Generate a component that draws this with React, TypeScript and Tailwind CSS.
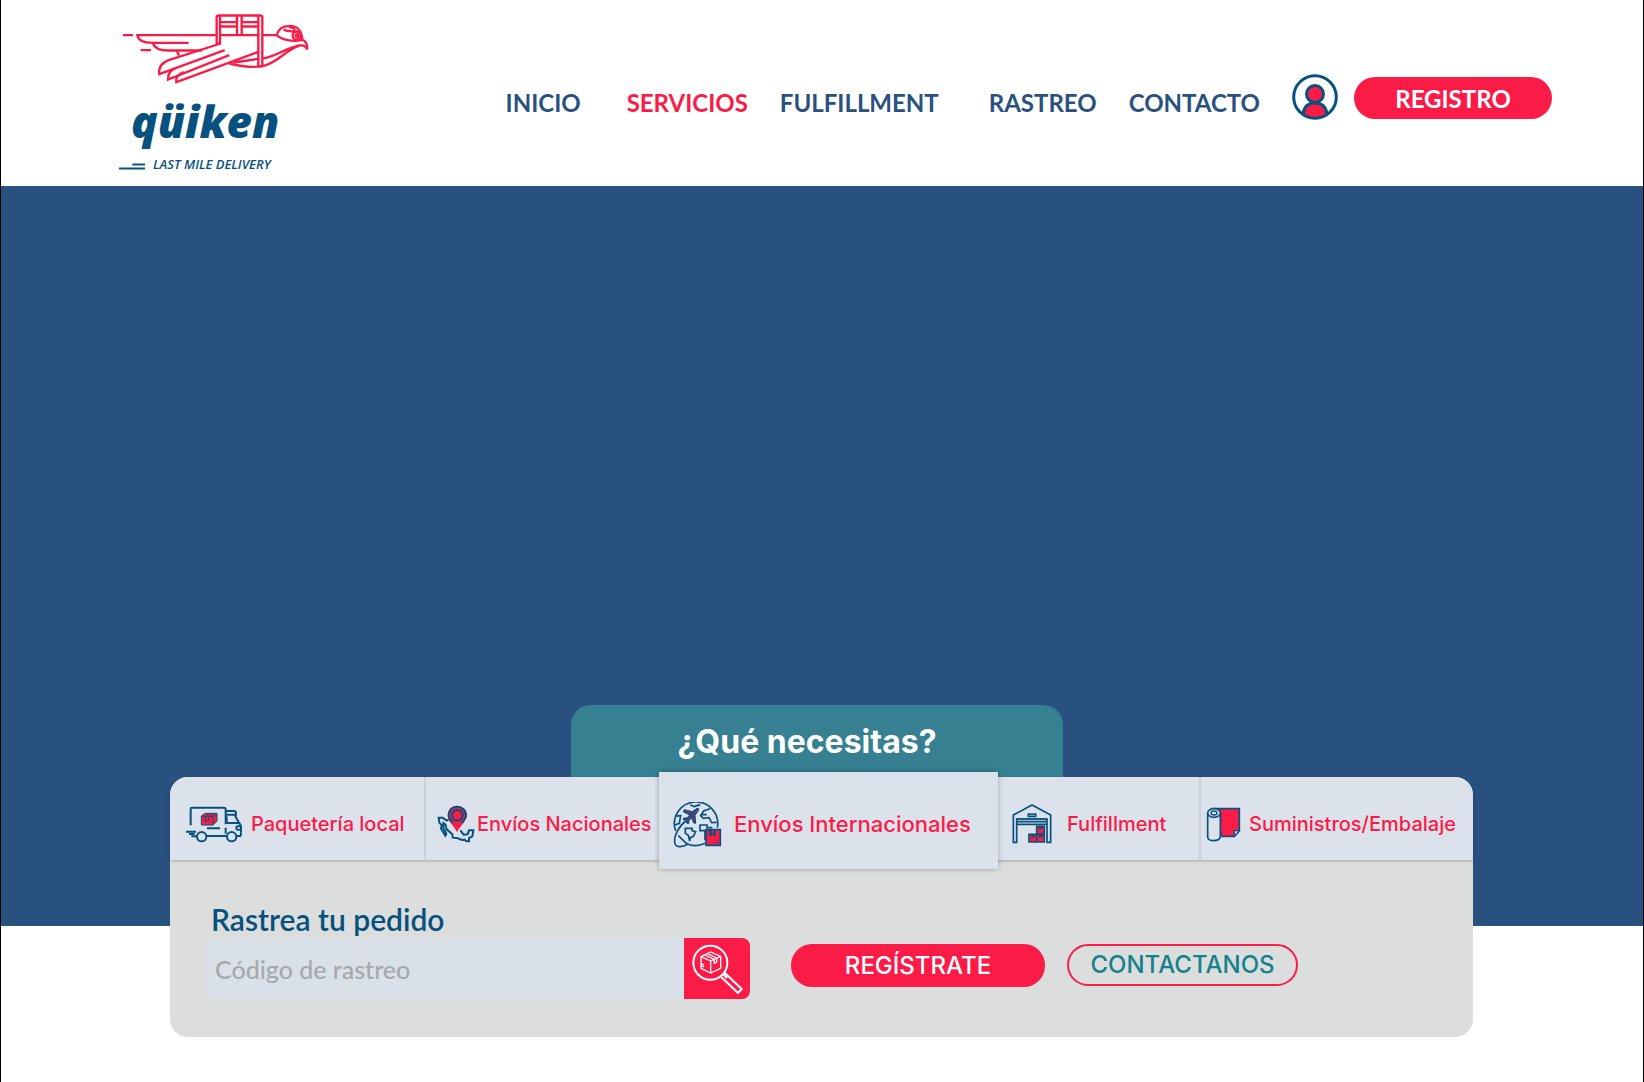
import React from "react";

const NAVY = "#07517f";
const RED = "#fb1b47";

function Bird() {
  return (
    <svg viewBox="0 0 690 260" className="h-[87px] w-[230px]" fill="none" stroke={RED} strokeWidth="7" aria-hidden="true">
      <path d="M69 105H99M122 150H153" />
      <path d="M350 105H112C114 120 128 128 158 128H266" />
      <path d="M158 128C163 144 178 151 205 151H306" />
      <path d="M230 152L237 166" />
      <path d="M350 130V52Q350 46 356 46H481Q487 46 487 52V198" />
      <path d="M360 132V46M475 46V198M348 132L362 128M474 198H488" />
      <path d="M411 46V104M425 46V104M362 66H411M425 66H475M362 79H411M425 79H475M360 105H475M487 105H530" />
      <path d="M362 130L206 180C184 188 175 200 178 222L374 150" />
      <path d="M226 204C208 212 203 222 204 238L388 165" />
      <path d="M252 216C232 223 227 232 229 246L475 155" />
      <path d="M388 190C432 201 460 203 488 198C535 187 548 156 598 136" />
      <path d="M400 187C435 183 452 180 475 176M488 175C525 170 548 148 598 136C611 135 619 140 621 148C623 136 622 125 606 118" />
      <path d="M530 105C535 86 551 77 569 77C590 77 606 90 607 119C583 125 550 122 530 105Z" />
      <path d="M551 88C559 94 571 92 581 95C589 84 576 80 567 82" />
      <circle cx="590" cy="106" r="12" />
      <circle cx="591" cy="106" r="4" fill={RED} />
    </svg>
  );
}

function Logo() {
  return (
    <a href="#inicio" aria-label="qüiken last mile delivery" className="flex w-[230px] shrink-0 flex-col">
      <Bird />
      <span className="pl-[31px] font-['Open_Sans'] text-[44px] leading-[69px] font-extrabold text-[#07517f] italic">
        qüiken
      </span>
      <span className="flex items-center gap-2 pl-[19px]">
        <svg viewBox="0 0 78 20" className="mt-1 h-[7px] w-[26px]" stroke={NAVY} strokeWidth="6" aria-hidden="true">
          <path d="M40 4H78M0 16H78" />
        </svg>
        <span className="font-['Open_Sans'] text-[13px] leading-4 font-semibold whitespace-nowrap text-[#07517f] italic">
          LAST MILE DELIVERY
        </span>
      </span>
    </a>
  );
}

function UserIcon() {
  return (
    <svg viewBox="0 0 46 46" className="size-[46px]" fill="none" stroke={NAVY} strokeWidth="3" aria-hidden="true">
      <path d="M11 40C12 33 16 29 23 29S34 33 35 40C28 45 18 45 11 40Z" fill={RED} stroke="none" />
      <path d="M11 40C12 33 16 29 23 29S34 33 35 40" />
      <circle cx="23" cy="20" r="8.5" fill={RED} />
      <circle cx="23" cy="23" r="21.3" />
    </svg>
  );
}

function TruckIcon() {
  return (
    <svg viewBox="75 105 174 117" className="h-[39px] w-[58px] shrink-0" fill="none" stroke={NAVY} strokeWidth="6" aria-hidden="true">
      <path d="M92 166V117Q92 113 96 113H192Q197 113 197 118V163M197 173V191" />
      <path d="M197 123H221Q228 123 228 130V137M197 134H224L237 159M199 159H238L243 169V187M200 139V159" />
      <path d="M78 185H108M87 192H104M94 199H110M140 198H200M231 198H241Q243 198 243 187M141 175H180" />
      <path d="M242 169H233Q229 169 229 174Q229 179 233 179H242" />
      <circle cx="125" cy="200" r="14" />
      <circle cx="215" cy="200" r="14" />
      <path d="M124 138L136 130H171V153L159 165H124Z" fill={RED} strokeWidth="3" />
      <path d="M124 139H159L171 130M159 139V164M136 139L147 130M147 139L158 130M136 140V152H147V140" strokeWidth="3" />
    </svg>
  );
}

function MexicoIcon() {
  return (
    <svg viewBox="51 105 114 114" className="size-[38px] shrink-0" fill="none" stroke={NAVY} strokeWidth="6" aria-hidden="true">
      <path d="M86 150L79 151L68 143H56L58 158L65 166L63 176L76 197L79 191L70 174L70 159L76 163L80 178L97 193L98 203L111 204L126 210L134 209L139 214H147L147 204L157 199L160 181L147 181L143 193L131 194L121 181" />
      <path d="M111 180C103 164 86 154 86 136C86 120 97 110 111 110S137 120 137 136C137 154 119 164 111 180Z" fill={RED} stroke={RED} />
      <path d="M98 159C91 152 86 145 86 136C86 120 97 110 111 110S138 120 138 136C138 145 132 152 125 159" />
      <circle cx="112" cy="136" r="16" />
    </svg>
  );
}

function GlobeIcon() {
  return (
    <svg viewBox="99 335 147 138" className="h-[46px] w-[49px] shrink-0" fill="none" stroke={NAVY} strokeWidth="5" aria-hidden="true">
      <path d="M195 459A65 65 0 0 1 136 458M107 422A65 65 0 1 1 232 412" />
      <path d="M140 389C116 408 99 440 105 460C109 472 128 471 143 462M115 436L139 459" />
      <path d="M106 377L122 376L118 399L105 404M151 343L162 349L181 343M210 355L191 362L182 376L190 384L207 382L215 397L230 396M185 373H200" />
      <path d="M136 414H156V421L167 424L160 438L151 442L149 452L145 435L136 429ZM195 450V421H180V404H201V412H217" />
      <path d="M133 358L157 364L171 354L176 355L175 361L165 375L167 399L161 398L155 383L147 390L146 400L141 399L138 390L129 387L131 383L141 383L149 374L130 364Z" fill={NAVY} strokeWidth="3" />
      <path d="M140 391L173 358M138 362L152 369M163 391L159 381" stroke={RED} strokeWidth="3" />
      <path d="M198 418H241V465H198Z" fill={RED} />
      <path d="M209 419V438L218 432L226 438V419" fill={NAVY} strokeWidth="2" />
      <path d="M215 420H221V429L218 427L215 429Z" fill={RED} stroke="none" />
      <path d="M225 457H234" strokeWidth="3" />
    </svg>
  );
}

function WarehouseIcon() {
  return (
    <svg viewBox="66 104 120 120" className="size-10 shrink-0" fill="none" stroke={NAVY} strokeWidth="5" aria-hidden="true">
      <path d="M70 219V137L126 107L182 137V219H171V149H80V219Z" />
      <path d="M80 149H171M80 157H171M80 165H171M115 134H137V141H115Z" />
      <path d="M140 171H163V194H140ZM117 195H140V218H117ZM140 195H163V218H140Z" fill={RED} />
      <path d="M148 171V180L152 177L156 180V171ZM125 195V204L129 201L133 204V195ZM148 195V204L152 201L156 204V195Z" fill={NAVY} strokeWidth="2" />
    </svg>
  );
}

function RollIcon() {
  return (
    <svg viewBox="78 113 105 105" className="size-[35px] shrink-0" fill="none" stroke={NAVY} strokeWidth="5" aria-hidden="true">
      <path d="M101 118H178V184L163 201H121V132Z" fill={RED} />
      <path d="M178 184H163V201Z" fill="#dce2ec" strokeWidth="4" />
      <path d="M83 132V203Q84 214 101 214T121 203V132" fill="#dce2ec" />
      <ellipse cx="102" cy="131" rx="19" ry="13" fill="#dce2ec" />
      <ellipse cx="102" cy="131" rx="9" ry="6" strokeWidth="4" />
    </svg>
  );
}

function SearchBoxIcon() {
  return (
    <svg viewBox="38 45 153 150" className="h-[50px] w-[51px]" fill="none" stroke="#fff" strokeWidth="6" strokeLinejoin="round" aria-hidden="true">
      <circle cx="93" cy="101" r="51" />
      <path d="M125 143L176 192L187 180L136 131M133 137L143 147" />
      <path d="M65 83L94 69L124 82V118L94 132L65 118ZM65 83L94 96L124 82M94 96V132M75 78L105 91V103L112 99V87L84 74M66 110L74 114M66 104L74 108" strokeWidth="4" />
    </svg>
  );
}

const links = [
  { label: "INICIO", className: "mr-[46px] text-[#28517f]" },
  { label: "SERVICIOS", className: "mr-8 text-[#fb1b47]" },
  { label: "FULFILLMENT", className: "mr-[50px] text-[#28517f]" },
  { label: "RASTREO", className: "mr-8 text-[#28517f]" },
  { label: "CONTACTO", className: "mr-8 text-[#28517f]" },
];

const tabs = [
  { label: "Paquetería local", icon: <TruckIcon />, className: "gap-2 rounded-tl-[18px] pt-[11px] pl-[15px] text-[20px]" },
  { label: "Envíos Nacionales", icon: <MexicoIcon />, className: "gap-[2px] border-l-2 border-[#cbd1da] pt-[11px] pl-[11px] text-[20px]" },
  {
    label: "Envíos Internacionales",
    icon: <GlobeIcon />,
    className: "relative z-10 -mt-[5px] -mb-[9px] gap-3 pt-2 pl-[14px] text-[22px] shadow-[0_0_5px_rgba(0,0,0,0.3)]",
  },
  { label: "Fulfillment", icon: <WarehouseIcon />, className: "gap-[15px] pt-[11px] pl-[14px] text-[20px]" },
  { label: "Suministros/Embalaje", icon: <RollIcon />, className: "gap-2 rounded-tr-[18px] border-l-2 border-[#cbd1da] pt-[11px] pl-[5px] text-[20px]" },
];

export default function App() {
  return (
    <div className="min-h-screen border-x border-black bg-white font-['Inter',sans-serif]">
      <header className="flex min-h-[186px] items-start justify-between pr-[91px] pl-[99px]">
        <Logo />
        <div className="flex items-center pt-[74px]">
          <nav className="flex items-center pt-[11px] font-['Lato',sans-serif] text-2xl leading-7 font-bold">
            {links.map((l) => (
              <a key={l.label} href="#" className={l.className}>
                {l.label}
              </a>
            ))}
          </nav>
          <a href="#" aria-label="Mi cuenta" className="mr-4">
            <UserIcon />
          </a>
          <button className="mt-[2px] h-[42px] w-[198px] rounded-full bg-[#fb1b47] pt-[2px] font-['Lato',sans-serif] text-2xl font-bold text-white">
            REGISTRO
          </button>
        </div>
      </header>

      <main>
        <section className="flex h-[740px] flex-col justify-end bg-[#28517f] pr-[170px] pl-[169px]">
          <div className="-mb-[111px] flex flex-col">
            <h1 className="mr-[410px] ml-[401px] h-[72px] rounded-t-[20px] bg-[#368092] pr-5 text-center text-[32px] leading-[74px] font-bold text-white">
              ¿Qué necesitas?
            </h1>
            <div className="rounded-[18px] bg-[#dcdedd]">
              <div className="grid h-[83px] grid-cols-[254fr_235fr_339fr_201fr_274fr] rounded-t-[18px] shadow-[0_1px_3px_rgba(0,0,0,0.25)]">
                {tabs.map((t) => (
                  <button
                    key={t.label}
                    className={`flex items-center bg-[#dce2ec] font-medium whitespace-nowrap text-[#fb1b47] ${t.className}`}
                  >
                    {t.icon}
                    <span>{t.label}</span>
                  </button>
                ))}
              </div>
              <form className="flex items-end px-[37px] pt-[42px] pb-[38px]" onSubmit={(e) => e.preventDefault()}>
                <div className="mr-[41px]">
                  <label htmlFor="codigo" className="block pb-[2px] pl-1 font-['Lato',sans-serif] text-[30px] leading-[34px] font-semibold text-[#07517f]">
                    Rastrea tu pedido
                  </label>
                  <div className="flex h-[61px]">
                    <input
                      id="codigo"
                      type="text"
                      placeholder="Código de rastreo"
                      className="w-[477px] rounded-l-[8px] bg-[#dae0e8] pt-[2px] pl-2 font-['Lato',sans-serif] text-[25px] font-medium outline-none placeholder:text-[#a5a9ae]"
                    />
                    <button aria-label="Buscar" className="flex w-[66px] items-center justify-center rounded-r-[8px] bg-[#fb1b47]">
                      <SearchBoxIcon />
                    </button>
                  </div>
                </div>
                <button className="mr-[22px] mb-3 h-[43px] w-[254px] rounded-[21px] bg-[#fb1b47] text-[24px] font-medium text-white">
                  REGÍSTRATE
                </button>
                <button className="mb-[13px] h-[42px] w-[231px] rounded-full border-2 border-[#fb1b47] text-[24px] font-medium text-[#13828c]">
                  CONTACTANOS
                </button>
              </form>
            </div>
          </div>
        </section>
      </main>
    </div>
  );
}
